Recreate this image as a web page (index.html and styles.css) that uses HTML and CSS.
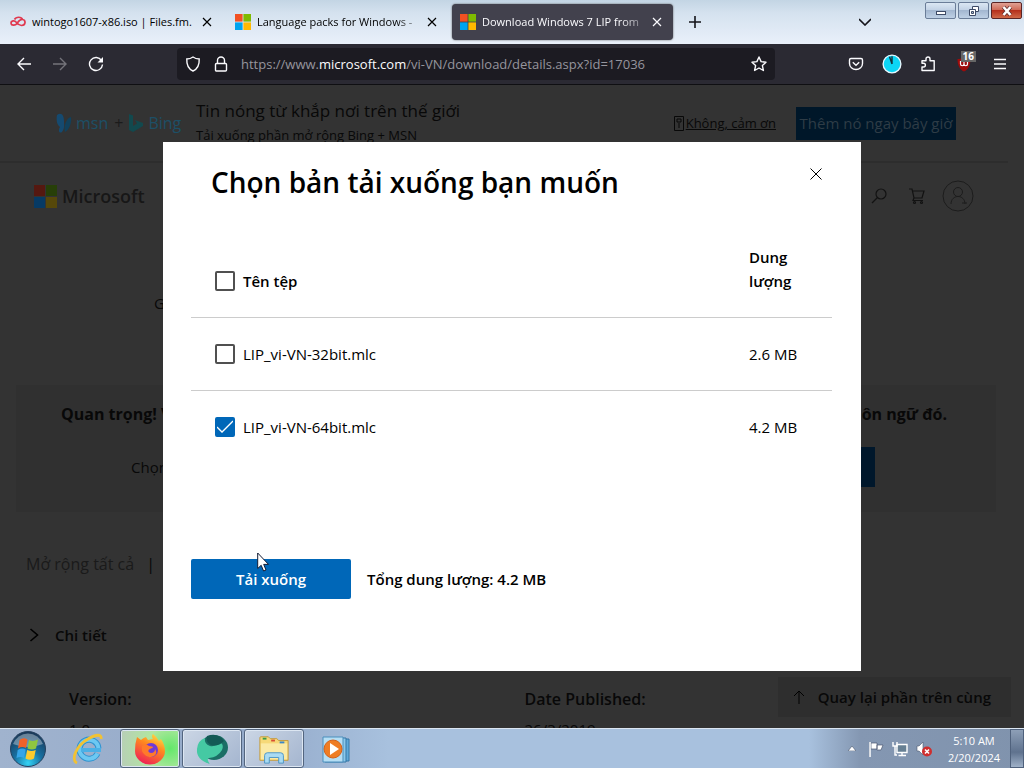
FILE: index.html
```html
<!DOCTYPE html>
<html lang="vi">
<head>
<meta charset="utf-8">
<meta name="viewport" content="width=device-width, initial-scale=1">
<title>Download Windows 7 LIP from Official Microsoft Download Center</title>
<link rel="stylesheet" href="styles.css">
</head>
<body>
<header class="tabstrip">
  <div class="tabs">
    <div class="tab">
      <svg class="fav" viewBox="0 0 16 16"><path d="M1 9.500C1 6.500 4.500 6 6.500 8.500C8.500 11 9.500 11.500 11.500 11.500C16 11.500 16 6 12.500 5.500C10 5 8.500 7.500 7 9.500C5.500 11.500 1.500 12 1 9.500M4.500 5.500C6 2.500 11.500 2.500 12.500 5.500" fill="none" stroke="#e0394f" stroke-width="1.700"/></svg>
      <span class="tab-title">wintogo1607-x86.iso | Files.fm.</span>
      <button class="tab-x" aria-label="Close tab"><svg viewBox="0 0 10 10"><path d="M1 1L9 9M9 1L1 9"/></svg></button>
    </div>
    <div class="tab">
      <svg class="fav" viewBox="0 0 16 16"><path fill="#f25022" d="M0 0h7.600v7.600H0z"/><path fill="#7fba00" d="M8.400 0H16v7.600H8.400z"/><path fill="#00a4ef" d="M0 8.400h7.600V16H0z"/><path fill="#ffb900" d="M8.400 8.400H16V16H8.400z"/></svg>
      <span class="tab-title fade">Language packs for Windows -</span>
      <button class="tab-x" aria-label="Close tab"><svg viewBox="0 0 10 10"><path d="M1 1L9 9M9 1L1 9"/></svg></button>
    </div>
    <div class="tab active">
      <svg class="fav" viewBox="0 0 16 16"><path fill="#f25022" d="M0 0h7.600v7.600H0z"/><path fill="#7fba00" d="M8.400 0H16v7.600H8.400z"/><path fill="#00a4ef" d="M0 8.400h7.600V16H0z"/><path fill="#ffb900" d="M8.400 8.400H16V16H8.400z"/></svg>
      <span class="tab-title fade">Download Windows 7 LIP from</span>
      <button class="tab-x" aria-label="Close tab"><svg viewBox="0 0 10 10"><path d="M1 1L9 9M9 1L1 9"/></svg></button>
    </div>
    <button class="new-tab" aria-label="New tab"><svg viewBox="0 0 12 12"><path d="M6 0V12M0 6H12"/></svg></button>
  </div>
  <button class="all-tabs" aria-label="List all tabs"><svg viewBox="0 0 12 8"><path d="M0 1L6 7L12 1"/></svg></button>
  <div class="win-buttons">
    <button class="wb" aria-label="Minimize"><svg viewBox="0 0 16 12"><rect x="3.500" y="6.500" width="9" height="3" fill="#fff" stroke="#3d4a66"/></svg></button>
    <button class="wb" aria-label="Restore"><svg viewBox="0 0 16 12"><path d="M6.500 1.500h6v5h-6z" fill="#fff" stroke="#3d4a66"/><path d="M3.500 4.500h6v6h-6z" fill="#fff" stroke="#3d4a66"/><path d="M5.500 6.500h2v2h-2z" fill="#a9bcd4" stroke="#3d4a66"/></svg></button>
    <button class="wb close" aria-label="Close"><svg viewBox="0 0 16 12"><path d="M4.500 2L11.500 10M11.500 2L4.500 10" stroke="#5a2a2a" stroke-width="4"/><path d="M4.500 2L11.500 10M11.500 2L4.500 10" stroke="#fff" stroke-width="2.600"/></svg></button>
  </div>
</header>

<nav class="toolbar">
  <div class="tools">
    <button class="tool" aria-label="Back"><svg viewBox="0 0 16 16"><path d="M15 8H2M8 2L2 8L8 14"/></svg></button>
    <button class="tool dim" aria-label="Forward"><svg viewBox="0 0 16 16"><path d="M1 8H14M8 2L14 8L8 14"/></svg></button>
    <button class="tool" aria-label="Reload"><svg viewBox="0 0 16 16"><path d="M13.500 4.500A6.500 6.500 0 1 0 14.500 8.500"/><path d="M15 1V6.500H9.500Z" fill="#fbfbfe" stroke="none"/></svg></button>
  </div>
  <div class="urlbar">
    <svg viewBox="0 0 16 16"><path d="M8 1C6 2.500 4 3 1.800 3C1.500 9 3.500 13 8 15C12.500 13 14.500 9 14.200 3C12 3 10 2.500 8 1Z"/></svg>
    <svg viewBox="0 0 16 16"><rect x="2.500" y="7.500" width="11" height="7.500" rx="1"/><path d="M4.500 7.500V4.500a3.500 3.500 0 0 1 7 0V7.500"/></svg>
    <span class="url">https://www.<b>microsoft.com</b>/vi-VN/download/details.aspx?id=17036</span>
    <button class="tool" aria-label="Bookmark this page"><svg viewBox="0 0 16 16"><path d="M8 1L10.100 5.600L15 6.200L11.400 9.600L12.400 14.500L8 12L3.600 14.500L4.600 9.600L1 6.200L5.900 5.600Z" stroke-linejoin="round"/></svg></button>
  </div>
  <div class="tools">
    <button class="tool" aria-label="Save to Pocket"><svg viewBox="0 0 16 16"><path d="M3 2.500H13Q14.500 2.500 14.500 4V7.500A6.500 6 0 0 1 1.500 7.500V4Q1.500 2.500 3 2.500Z"/><path d="M4.800 6.200L8 9.200L11.200 6.200"/></svg></button>
    <button class="tool" aria-label="Timer"><svg class="big" viewBox="0 0 18 18"><circle cx="9" cy="9" r="8" fill="#0cd5f5" stroke="#e8f8ff" stroke-width="1.200"/><path d="M9 9L6.800 2.500M9 9V2" stroke="#17323c" stroke-width="1.300"/></svg></button>
    <button class="tool" aria-label="Extensions"><svg viewBox="0 0 16 16"><path d="M2 14.500V11H3.500A1.900 1.900 0 0 0 3.500 7.200H2V4.700H6V3a2 2 0 0 1 4 0V4.700H14.200V14.500Z" stroke-linejoin="round"/></svg></button>
    <button class="tool" aria-label="uBlock Origin"><svg viewBox="0 0 16 16"><path d="M8 1C6 2.500 4 3 1.500 3C1.500 9 3.500 13.500 8 15.500C12.500 13.500 14.500 9 14.500 3C12 3 10 2.500 8 1Z" fill="#9e0b0b" stroke="none"/><path d="M4.500 5V8a1.700 1.700 0 0 0 3.500 0V5V8a1.700 1.700 0 0 0 3.500 0V5" stroke-width="1.200"/></svg><span class="badge">16</span></button>
    <button class="tool" aria-label="Open menu"><svg viewBox="0 0 16 16"><path d="M2 3.500H14M2 8H14M2 12.500H14"/></svg></button>
  </div>
</nav>

<main class="viewport">
  <div class="site">
    <section class="promo">
      <div class="brands">
        <svg class="butterfly" viewBox="0 0 16 22"><path d="M1 3C5 0 8 3 8 9C8 13 9 16 6 20C3 22 2 18 4 15C1 13 0 8 1 3Z" fill="#154a70"/><path d="M9 20C7 14 11 5 15 5C16 11 13 18 9 20Z" fill="#12415c"/></svg>
        <span>msn</span><span class="plus">+</span>
        <svg class="b-mark" viewBox="0 0 14 18"><path d="M0 0L4 1.500V12L8 9.500L6 6L14 9V12L4 18L0 16Z" fill="#12494e"/></svg>
        <span>Bing</span>
      </div>
      <div class="promo-copy">
        <p class="promo-title">Tin nóng từ khắp nơi trên thế giới</p>
        <p class="promo-sub">Tải xuống phần mở rộng Bing + MSN</p>
      </div>
      <a class="no-thanks" href="#"><svg viewBox="0 0 10 15"><path d="M.5 .5h9v14h-9zM3 3h4v3H3zM5 7v5" fill="none" stroke="#080808"/></svg>Không, cảm ơn</a>
      <button class="add-now">Thêm nó ngay bây giờ</button>
    </section>
    <section class="masthead">
      <a class="ms" href="#"><svg viewBox="0 0 23 23"><path fill="#551810" d="M0 0h11v11H0z"/><path fill="#273f08" d="M12 0h11v11H12z"/><path fill="#073a64" d="M0 12h11v11H0z"/><path fill="#56480a" d="M12 12h11v11H12z"/></svg>Microsoft</a>
      <div class="mast-icons">
        <svg viewBox="0 0 18 18"><circle cx="11" cy="7" r="5"/><path d="M7.500 10.500L2 16"/></svg>
        <svg viewBox="0 0 18 18"><path d="M1 2H4L6 11H14L16 4H4.500M6 11L5 13.500H15"/><circle cx="6.500" cy="15.500" r="1"/><circle cx="13.500" cy="15.500" r="1"/></svg>
        <svg class="avatar" viewBox="0 0 32 32"><circle cx="16" cy="16" r="15"/><circle cx="16" cy="12" r="4.500"/><path d="M9 24C9 14 23 14 23 24M20 23H25"/></svg>
      </div>
    </section>
    <p class="lead">G</p>
    <section class="notice">
      <p class="notice-line"><span>Quan trọng! V</span><span>ôn ngữ đó.</span></p>
      <div class="choose"><span>Chọn</span><button class="dl" aria-label="Tải xuống"></button></div>
    </section>
    <p class="expand"><a href="#">Mở rộng tất cả</a><span>|</span></p>
    <button class="details"><svg viewBox="0 0 10 14"><path d="M1.500 1L8.500 7L1.500 13"/></svg>Chi tiết</button>
    <dl class="facts">
      <div><dt>Version:</dt><dd>1.0</dd></div>
      <div><dt>Date Published:</dt><dd>26/3/2019</dd></div>
    </dl>
  </div>
  <button class="to-top"><svg viewBox="0 0 12 14"><path d="M6 14V1M1 6L6 1L11 6"/></svg>Quay lại phần trên cùng</button>

  <div class="backdrop">
    <section class="modal" role="dialog" aria-labelledby="modal-title">
      <div class="modal-head">
        <h1 id="modal-title">Chọn bản tải xuống bạn muốn</h1>
        <button class="modal-x" aria-label="Đóng"><svg viewBox="0 0 12 12"><path d="M.5 .5L11.500 11.500M11.500 .5L.5 11.500"/></svg></button>
      </div>
      <table class="files">
        <thead><tr>
          <th><label><input type="checkbox">Tên tệp</label></th>
          <th class="size">Dung lượng</th>
        </tr></thead>
        <tbody>
          <tr><td><label><input type="checkbox">LIP_vi-VN-32bit.mlc</label></td><td class="size">2.6 MB</td></tr>
          <tr><td><label><input type="checkbox" checked>LIP_vi-VN-64bit.mlc</label></td><td class="size">4.2 MB</td></tr>
        </tbody>
      </table>
      <div class="modal-foot">
        <button class="download">Tải xuống</button>
        <span>Tổng dung lượng: 4.2 MB</span>
        <svg class="cursor" viewBox="0 0 12 20"><path d="M.7 1V16.500L4.200 13.300L6.600 19L9 18L6.700 12.400H11.500Z" fill="#fff" stroke="#111a33"/></svg>
      </div>
    </section>
  </div>
</main>

<footer class="taskbar">
  <button class="start" aria-label="Start"><svg viewBox="0 0 38 38">
    <defs><radialGradient id="orb" cx=".5" cy=".9" r=".9"><stop offset="0" stop-color="#35d3f5"/><stop offset=".45" stop-color="#176fa0"/><stop offset="1" stop-color="#1a3554"/></radialGradient></defs>
    <circle cx="19" cy="19" r="17.500" fill="url(#orb)" stroke="#26415f"/><path d="M4 14A16 16 0 0 1 34 14Q19 20 4 14Z" fill="#fff" opacity=".35"/>
    <path d="M10.500 10Q14.500 7 18.500 9.500L17 18Q13 16 9 18.500Z" fill="#f0622a"/><path d="M20 10Q24 12 29 9.500L27 18.500Q23 20.500 18.500 18.500Z" fill="#8fc63f"/><path d="M8.700 20Q13 17.500 16.700 19.500L15 28Q11.500 26 7.500 28Z" fill="#35a5e8"/><path d="M18.200 20Q22.500 22 26.700 20L25 28.500Q21 31 16.500 28.500Z" fill="#fdcb2e"/></svg></button>
  <button class="task plain" aria-label="Internet Explorer"><svg viewBox="0 0 32 32"><path d="M25.500 20.500A9.500 9.500 0 1 1 26.500 15.500" fill="none" stroke="#2f93d0" stroke-width="6"/><path d="M25.500 20.500A9.500 9.500 0 1 1 26.500 15.500" fill="none" stroke="#6cc8f2" stroke-width="4"/><path d="M9 17H29" stroke="#4bb0e6" stroke-width="4"/><path d="M5 30C-2 27 5 12 16 6C24 1 30 1 29 6" fill="none" stroke="#f2c233" stroke-width="2.800"/></svg></button>
  <button class="task firefox" aria-label="Firefox"><svg viewBox="0 0 32 32">
    <defs><linearGradient id="fox" x1=".8" y1="0" x2=".3" y2="1"><stop offset="0" stop-color="#ffe14a"/><stop offset=".4" stop-color="#ff8a1f"/><stop offset="1" stop-color="#ef1f57"/></linearGradient></defs>
    <path d="M3 4L7 7Q9 5 12 4L14 7L19 6Q17 3 19 1Q23 4 25 8L27 6Q31 12 31 18A15 13.500 0 0 1 1 18Q1 10 3 4Z" fill="url(#fox)"/><circle cx="17" cy="17" r="7" fill="#6e3ad8"/><path d="M8 13Q12 10 15 13Q19 13 19 14.500L15 16.500Q13 19 17 20Q21 20 21 16Q24 20 20 23Q14 26 10 21Q7 18 8 13Z" fill="#ff7a2a"/></svg></button>
  <button class="task" aria-label="Browser"><svg viewBox="0 0 32 32"><ellipse cx="18" cy="14.500" rx="14" ry="12.500" fill="#1b6f66"/><path d="M1 16Q2 7 9 5Q8 11 14 13Q19 14 25 10Q28 12 26 17Q22 24 13 25Q10 26 14 31Q0 27 1 16Z" fill="#45c9a3"/><path d="M11 3Q22 -1 28 8Q22 14 15 12Q9 9 11 3Z" fill="#135a56"/></svg></button>
  <button class="task" aria-label="Explorer"><svg viewBox="0 0 34 32"><path d="M2 4Q2 3 3 3H11L13 5H20L22 7H32V28H2Z" fill="#f6d978" stroke="#c39b3c"/><path d="M3 10H31V27H3Z" fill="#fbeaa5"/><path d="M5 4h4v2H5z" fill="#3c9b48"/><path d="M14 6h4v2h-4z" fill="#d84d33"/><path d="M23 8h5v2h-5z" fill="#3a86c8"/><path d="M7 31V23Q7 20 10 20H24Q27 20 27 23V31H22V25H12V31Z" fill="#a9dbf3" stroke="#4c94c4"/></svg></button>
  <button class="task plain" aria-label="Media Player"><svg viewBox="0 0 32 32"><path d="M8 6H29V28H8Z" fill="#5fa9d8" stroke="#3577a6"/><path d="M5 5H26V29H5Z" fill="#8cc8ea" stroke="#3577a6"/><path d="M3 4H23V29H3Z" fill="#b5def4" stroke="#4b8fbd"/><circle cx="13" cy="16" r="9" fill="#ef7d24" stroke="#d3611a"/><path d="M10 10L19 16L10 22Z" fill="#fff"/></svg></button>
  <div class="tray">
    <svg class="up" viewBox="0 0 8 5"><path d="M0 5L4 0L8 5Z" fill="#fff" stroke="#48566d" stroke-width=".6"/></svg>
    <svg viewBox="0 0 16 16"><path d="M1.500 1V16M3 2H9V8H3ZM9 4L15 4L13 9H9Z" fill="#fff" stroke="#4a5870" stroke-width=".7"/><path d="M2 1V16" stroke="#fff" stroke-width="1.500"/></svg>
    <svg viewBox="0 0 16 16"><path d="M5 3.500H15V11.500H5ZM10 12V14.500M6.500 14.500H14" fill="#667f93" stroke="#fff" stroke-width="1.400"/><path d="M1 1V5H5V1M3 5V14H5" fill="none" stroke="#fff" stroke-width="1.400"/></svg>
    <svg viewBox="0 0 16 16"><path d="M1 5H3L7 1V14L3 10H1Z" fill="#fff" stroke="#4a5870" stroke-width=".6"/><circle cx="11" cy="10.500" r="5" fill="#cf2e2e"/><path d="M9 8.500L13 12.500M13 8.500L9 12.500" stroke="#fff" stroke-width="1.600"/></svg>
    <div class="clock"><span>5:10 AM</span><span>2/20/2024</span></div>
  </div>
  <button class="show-desktop" aria-label="Show desktop"></button>
</footer>
</body>
</html>
```

FILE: styles.css
```css
* { box-sizing: border-box; }
body {
  margin: 0;
  height: 100vh;
  display: flex;
  flex-direction: column;
  overflow: hidden;
  font: 15px/24px "Open Sans", "Noto Sans", sans-serif;
  color: #000;
}
button { font: inherit; color: inherit; padding: 0; border: 0; background: none; }
p, h1, dl, dd { margin: 0; }
a { color: inherit; text-decoration: none; }
svg { display: block; flex: none; fill: none; }

/* Tab strip */
.tabstrip {
  flex: none;
  height: 44px;
  display: flex;
  align-items: flex-start;
  padding-left: 2px;
  background: linear-gradient(180deg, #c3d5e4 0, #d5e2ef 30%, #e9f0fa 100%);
}
.tabs { flex: 1; display: flex; gap: 4px; padding-top: 4px; min-width: 0; }
.tab {
  flex: 0 1 221px;
  min-width: 0;
  height: 36px;
  display: flex;
  align-items: center;
  gap: 6px;
  padding: 0 8px;
  border-radius: 4px;
  font-size: 11px;
}
.tab.active { background: #42414d; color: #fbfbfe; box-shadow: 0 0 2px #555; }
.fav { width: 16px; height: 16px; }
.tab-title { flex: 1; min-width: 0; overflow: hidden; white-space: nowrap; }
.fade { -webkit-mask-image: linear-gradient(90deg, #000 86%, transparent 106%); mask-image: linear-gradient(90deg, #000 86%, transparent 106%); }
.tab-x { width: 16px; height: 16px; display: grid; place-items: center; }
.tab-x svg { width: 10px; stroke: currentColor; stroke-width: 1.2; }
.new-tab { width: 36px; display: grid; place-items: center; }
.new-tab svg { width: 12px; stroke: #15141a; stroke-width: 1.6; }
.all-tabs { width: 36px; height: 44px; margin-right: 42px; display: grid; place-items: center; }
.all-tabs svg { width: 12px; stroke: #15141a; stroke-width: 1.6; }
.win-buttons { display: flex; gap: 2px; padding: 2px 2px 0 0; }
.wb {
  width: 31px;
  height: 17px;
  display: grid;
  place-items: center;
  border: 1px solid #6a7d98;
  border-radius: 2px;
  background: linear-gradient(#dbe7f3 0, #c3d3e6 45%, #a3b7d0 50%, #bed0e5 100%);
}
.wb svg { width: 16px; height: 12px; }
.wb.close { border-color: #5b2525; background: linear-gradient(#e0a194 0, #cf6b58 45%, #b5301c 50%, #cf6847 100%); }

/* Navigation toolbar */
.toolbar {
  flex: none;
  height: 41px;
  display: flex;
  align-items: center;
  padding: 0 6px;
  background: #2b2a33;
  border-bottom: 1px solid #0f0f12;
}
.tools { display: flex; }
.tools:last-child { margin-left: auto; }
.tool { position: relative; width: 36px; height: 32px; display: grid; place-items: center; }
.tool svg, .urlbar > svg { width: 16px; height: 16px; stroke: #fbfbfe; stroke-width: 1.4; }
.tool .big { width: 20px; height: 20px; }
.dim { opacity: .35; }
.urlbar {
  flex: 0 1 598px;
  min-width: 0;
  height: 32px;
  margin-left: 63px;
  display: flex;
  align-items: center;
  gap: 12px;
  padding-left: 8px;
  border-radius: 4px;
  background: #1c1b22;
}
.url { flex: 1; min-width: 0; overflow: hidden; white-space: nowrap; font-size: 13px; color: #96959d; }
.url b { font-weight: 400; color: #fbfbfe; }
.urlbar .tool { width: 32px; }
.badge {
  position: absolute;
  top: 3px;
  right: 6px;
  padding: 0 2px;
  background: #666;
  color: #fff;
  font: 700 10px/11px "Open Sans", sans-serif;
}

/* Dimmed page */
.viewport { flex: 1; min-height: 0; position: relative; overflow: hidden; background: #333; color: #080808; }
.promo {
  height: 78px;
  display: flex;
  align-items: center;
  margin-right: 16px;
  padding: 0 52px 0 56px;
  border-bottom: 2px solid #2d2d2d;
}
.brands { width: 140px; display: flex; align-items: center; font-size: 16px; color: #1d4f66; }
.butterfly { width: 16px; height: 22px; margin-right: 4px; }
.b-mark { width: 14px; height: 18px; margin-right: 5px; }
.plus { margin: 0 6px; color: #1b1b1b; }
.promo-copy { flex: 1; }
.promo-title { font-size: 17px; }
.promo-sub { font-size: 13px; }
.no-thanks { display: flex; align-items: center; gap: 2px; margin-right: 20px; font-size: 13px; text-decoration: underline; }
.no-thanks svg { width: 10px; height: 15px; }
.add-now { width: 160px; height: 33px; background: #001729; color: #2e3c46; font-size: 15px; white-space: nowrap; }
.masthead { height: 66px; display: flex; justify-content: space-between; align-items: center; padding: 0 50px 0 34px; }
.ms { display: flex; align-items: center; gap: 5px; font-size: 18px; font-weight: 600; color: #171717; }
.ms svg { width: 23px; height: 23px; }
.mast-icons { display: flex; align-items: center; gap: 20px; stroke: #121212; stroke-width: 1.2; }
.mast-icons svg { width: 18px; height: 18px; }
.mast-icons .avatar { width: 32px; height: 32px; margin-left: -4px; stroke: #1c1c1c; stroke-width: 1; }
.lead { padding: 62px 0 0 154px; }
.notice { margin: 70px 28px 0 16px; height: 127px; padding: 17px 49px 0 45px; background: #303030; }
.notice-line { display: flex; justify-content: space-between; font-size: 16px; font-weight: 700; }
.choose { display: flex; justify-content: space-between; align-items: center; margin-top: 21px; padding: 0 72px 0 70px; }
.dl { width: 160px; height: 40px; background: #00172b; }
.expand { display: flex; gap: 12px; padding: 40px 0 0 26px; font-size: 16px; }
.expand a { color: #1a1a1a; }
.details { display: flex; align-items: center; gap: 16px; margin: 47px 0 0 29px; font-weight: 600; }
.details svg { width: 10px; height: 14px; stroke: #000; stroke-width: 1.6; }
.facts { display: grid; grid-template-columns: 1fr 1fr; padding: 40px 44px 0 69px; }
.facts dt { font-weight: 600; font-size: 16px; }
.facts dd { font-size: 15px; padding-top: 6px; }
.to-top {
  position: absolute;
  right: 13px;
  bottom: 11px;
  height: 40px;
  display: flex;
  align-items: center;
  gap: 13px;
  padding: 0 20px 0 15px;
  background: #2e2e2e;
  font-weight: 600;
}
.to-top svg { width: 12px; height: 14px; stroke: #000; stroke-width: 1; }

/* Download dialog */
.backdrop { position: absolute; inset: 0; display: flex; align-items: center; justify-content: center; }
.modal { width: 698px; max-width: 100%; padding: 20px 29px 72px 28px; background: #fff; color: #000; }
.modal-head { display: flex; justify-content: space-between; align-items: flex-start; padding: 0 8px 0 20px; }
.modal h1 { font-size: 28px; line-height: 40px; font-weight: 600; }
.modal-x { width: 16px; height: 24px; display: grid; place-items: center; }
.modal-x svg { width: 12px; stroke: #000; stroke-width: 1; }
.files { width: 100%; margin-top: 19px; border-collapse: collapse; }
.files th, .files td { padding: 24px; text-align: left; vertical-align: bottom; font-weight: 400; }
.files th { font-weight: 600; }
.files tbody tr { border-top: 1px solid #ccc; }
.files .size { width: 107px; }
.files label { display: flex; align-items: center; gap: 8px; }
.files input {
  appearance: none;
  width: 20px;
  height: 20px;
  margin: 0;
  border: 2px solid #505050;
  border-radius: 2px;
  background: #fff;
}
.files input:checked {
  border-color: #0067b8;
  background: #0067b8 url("data:image/svg+xml,%3Csvg xmlns='http://www.w3.org/2000/svg' viewBox='0 0 16 16'%3E%3Cpath d='M0 8L5 13L16 2' fill='none' stroke='white' stroke-width='1.300'/%3E%3C/svg%3E") center / 16px no-repeat;
}
.modal-foot { position: relative; display: flex; align-items: center; gap: 16px; margin-top: 96px; font-weight: 600; }
.download { width: 160px; height: 40px; border-radius: 2px; background: #0067b8; color: #fff; font-weight: 600; }
.cursor { position: absolute; left: 66px; top: -7px; width: 12px; height: 20px; }

/* Taskbar */
.taskbar {
  flex: none;
  height: 40px;
  display: flex;
  align-items: stretch;
  gap: 2px;
  border-top: 1px solid #dbe6f2;
  background: linear-gradient(90deg, #a0b3ce 0, #93a9c9 25%, #a8c1de 38%, #a8c1de 79%, #8497b2 84%, #8093ad 100%);
}
.start { width: 56px; display: grid; place-items: center; }
.start svg { width: 38px; height: 38px; }
.task {
  width: 60px;
  display: grid;
  place-items: center;
  border: 1px solid #53657f;
  border-radius: 3px;
  background: linear-gradient(135deg, #cbd6e5, #a4b5cf);
  box-shadow: inset 0 0 0 1px #dce6f2;
}
.task.plain { border-color: transparent; background: none; box-shadow: none; }
.task svg { width: 32px; height: 32px; }
.firefox { background: radial-gradient(circle at 85% 50%, #63e86a, #b1e6a0 45%, #b8cdb8 100%); }
.tray { margin-left: auto; display: flex; align-items: center; gap: 8px; }
.tray svg { width: 16px; height: 16px; }
.tray .up { width: 8px; height: 5px; margin-right: 4px; }
.clock { width: 68px; display: flex; flex-direction: column; align-items: center; color: #fff; font-size: 11px; line-height: 17px; }
.show-desktop { width: 14px; border: 1px solid #4f617c; background: linear-gradient(#8d9fb7, #5f728e 60%, #9fb1c8); }
```
